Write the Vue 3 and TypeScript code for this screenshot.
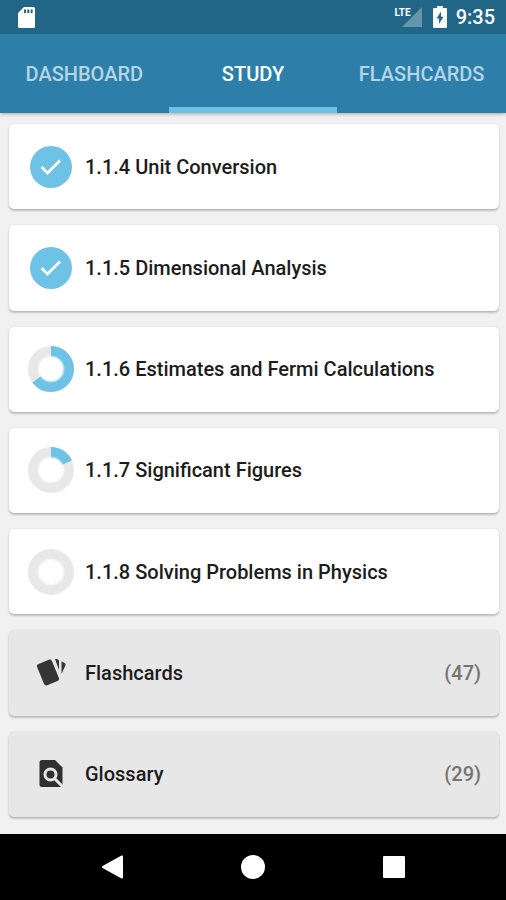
<script setup lang="ts">
import { ref } from 'vue'

interface Lesson {
  id: string
  title: string
  progress: number
}

interface Resource {
  id: 'flashcards' | 'glossary'
  title: string
  count: number
}

const tabs: string[] = ['Dashboard', 'Study', 'Flashcards']
const activeTab = ref('Study')

const lessons: Lesson[] = [
  { id: '1.1.4', title: 'Unit Conversion', progress: 100 },
  { id: '1.1.5', title: 'Dimensional Analysis', progress: 100 },
  { id: '1.1.6', title: 'Estimates and Fermi Calculations', progress: 65 },
  { id: '1.1.7', title: 'Significant Figures', progress: 18 },
  { id: '1.1.8', title: 'Solving Problems in Physics', progress: 0 },
]

const resources: Resource[] = [
  { id: 'flashcards', title: 'Flashcards', count: 47 },
  { id: 'glossary', title: 'Glossary', count: 29 },
]
</script>

<template>
  <div class="screen">
    <header class="top">
      <div class="status">
        <svg class="sd" viewBox="0 0 17 21" aria-hidden="true">
          <path fill="#fff" d="M6 0h9.500a1.500 1.500 0 0 1 1.500 1.500v18a1.500 1.500 0 0 1-1.500 1.500h-14A1.500 1.500 0 0 1 0 19.500V6z" />
          <path fill="#216687" d="M6 2.500h2v3.500H6zM9.300 2.500h2v3.500h-2zM12.600 2.500h2v3.500h-2z" />
        </svg>
        <div class="indicators">
          <div class="network">
            <span class="lte">LTE</span>
            <svg class="signal" viewBox="0 0 20 20" aria-hidden="true">
              <path fill="#6496ae" d="M20 0v20H0z" />
            </svg>
          </div>
          <svg class="battery" viewBox="0 0 14 22" aria-hidden="true">
            <path fill="#fff" d="M4 0h6v2h3a1 1 0 0 1 1 1v18a1 1 0 0 1-1 1H1a1 1 0 0 1-1-1V3a1 1 0 0 1 1-1h3z" />
            <path fill="#216687" d="M8 5.500v5.200h2.500L6 18v-5.500H3.500z" />
          </svg>
          <time class="clock">9:35</time>
        </div>
      </div>
      <nav class="tabs" role="tablist">
        <button
          v-for="tab in tabs"
          :key="tab"
          type="button"
          role="tab"
          class="tab"
          :class="{ active: tab === activeTab }"
          :aria-selected="tab === activeTab"
          @click="activeTab = tab"
        >
          {{ tab }}
        </button>
      </nav>
    </header>

    <main class="list">
      <a v-for="lesson in lessons" :key="lesson.id" class="card" href="#">
        <svg v-if="lesson.progress === 100" class="mark" viewBox="0 0 46 46" aria-hidden="true">
          <circle cx="23" cy="23" r="21" fill="#6ec2e6" />
          <path d="M13.500 23l6 6L32 16.500" fill="none" stroke="#fff" stroke-width="2.700" />
        </svg>
        <svg v-else class="mark" viewBox="0 0 46 46" aria-hidden="true">
          <circle cx="23" cy="23" r="17.500" fill="none" stroke="#e8e8e8" stroke-width="11" />
          <circle
            v-if="lesson.progress > 0"
            cx="23"
            cy="23"
            r="17.500"
            fill="none"
            stroke="#6ec2e6"
            stroke-width="11"
            pathLength="100"
            :stroke-dasharray="`${lesson.progress} 100`"
            transform="rotate(-90 23 23)"
          />
          <circle cx="23" cy="23" r="12.500" fill="none" stroke="#fff" stroke-opacity="0.5" stroke-width="2" />
        </svg>
        <span class="title">{{ lesson.id }} {{ lesson.title }}</span>
      </a>

      <a v-for="item in resources" :key="item.id" class="card muted" href="#">
        <svg v-if="item.id === 'flashcards'" class="mark" viewBox="0 0 46 46" aria-hidden="true">
          <rect x="12" y="11" width="16" height="23" rx="2.500" fill="#353535" transform="rotate(-22 20 22.500)" />
          <path fill="#353535" d="M27 9h1.500q2.500 0 2.500 2.500V20zM33.500 11.500l2.800 1.200q1.900.9 1.100 2.800L33.500 24z" />
        </svg>
        <svg v-else class="mark" viewBox="0 0 46 46" aria-hidden="true">
          <path fill="#303030" d="M14 9h13l7.500 7.500V34q0 2-2 2H14q-2.500 0-2.500-2.500v-22Q11.500 9 14 9z" />
          <circle cx="22.500" cy="23.500" r="5.500" fill="none" stroke="#e7e7e7" stroke-width="3" />
          <path d="M26.500 27.500l9 9" stroke="#e7e7e7" stroke-width="3" />
        </svg>
        <span class="title">{{ item.title }}</span>
        <span class="count">({{ item.count }})</span>
      </a>
    </main>

    <footer class="navbar">
      <button type="button" class="key" aria-label="Back">
        <svg viewBox="0 0 24 24" aria-hidden="true">
          <path fill="#fff" stroke="#fff" stroke-width="2" stroke-linejoin="round" d="M22 1.500v21L3 12z" />
        </svg>
      </button>
      <button type="button" class="key" aria-label="Home">
        <svg viewBox="0 0 24 24" aria-hidden="true"><circle cx="12" cy="12" r="12" fill="#fff" /></svg>
      </button>
      <button type="button" class="key" aria-label="Recent apps">
        <svg viewBox="0 0 24 24" aria-hidden="true"><rect x="1" y="1" width="22" height="22" rx="1" fill="#fff" /></svg>
      </button>
    </footer>
  </div>
</template>

<style>
body {
  margin: 0;
}
</style>

<style scoped>
.screen {
  display: flex;
  flex-direction: column;
  min-height: 100vh;
  background: #f1f1f1;
  font-family: Roboto, "Liberation Sans", sans-serif;
  font-size: 20px;
  font-weight: 500;
  line-height: 24px;
}

.top {
  background: #2d7fa9;
  box-shadow: 0 1px 4px rgba(0, 0, 0, 0.3);
}

.status {
  display: flex;
  align-items: center;
  justify-content: space-between;
  height: 34px;
  padding: 0 11px 0 18px;
  background: #216687;
  color: #fff;
}

.sd {
  width: 17px;
  height: 21px;
}

.indicators {
  display: flex;
  align-items: center;
}

.network {
  display: flex;
  align-items: flex-start;
  margin-right: 11px;
}

.lte {
  margin-right: -9px;
  font-size: 10px;
  font-weight: 700;
  line-height: 12px;
}

.signal {
  width: 20px;
  height: 20px;
}

.battery {
  width: 14px;
  height: 22px;
  margin-right: 9px;
}

.clock {
  font-size: 20px;
}

.tabs {
  display: grid;
  grid-template-columns: repeat(3, 1fr);
}

.tab {
  height: 79px;
  padding: 6px 0 0;
  border: 0;
  border-bottom: 6px solid transparent;
  background: none;
  color: #b3d5e6;
  font: inherit;
  text-transform: uppercase;
  white-space: nowrap;
  cursor: pointer;
}

.tab.active {
  border-bottom-color: #6ec2e6;
  color: #fff;
}

.list {
  display: grid;
  flex: 1;
  grid-auto-rows: minmax(64px, 1fr);
  gap: 16px;
  padding: 11px 7px 17px 9px;
}

.card {
  display: flex;
  align-items: center;
  gap: 11px;
  padding: 0 18px 0 19px;
  border-radius: 5px;
  background: #fff;
  box-shadow: 0 2px 2px rgba(0, 0, 0, 0.2), 0 0 2px rgba(0, 0, 0, 0.12);
  color: #1c1c1c;
  text-decoration: none;
}

.card.muted {
  background: #e7e7e7;
}

.mark {
  flex: none;
  width: 46px;
  height: 46px;
}

.title {
  flex: 1;
}

.count {
  color: #747474;
}

.navbar {
  display: grid;
  grid-template-columns: repeat(3, 1fr);
  height: 66px;
  padding: 0 42px;
  background: #000;
}

.key {
  display: flex;
  align-items: center;
  justify-content: center;
  padding: 0;
  border: 0;
  background: none;
  cursor: pointer;
}

.key svg {
  width: 24px;
  height: 24px;
}
</style>
